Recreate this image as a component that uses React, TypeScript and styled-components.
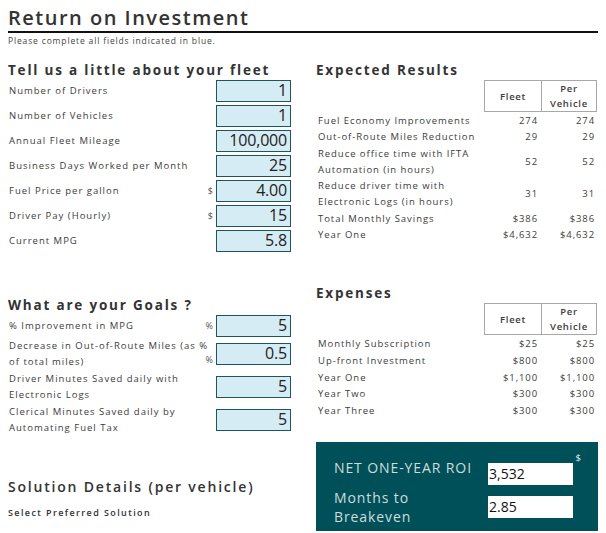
import React from "react";
import styled, { createGlobalStyle } from "styled-components";

const GlobalStyle = createGlobalStyle`
  html, body {
    margin: 0;
    padding: 0;
    background: #ffffff;
    font-family: "Open Sans", "Liberation Sans", sans-serif;
    color: #3c3c3c;
  }
`;

const Page = styled.div`
  width: 606px;
  height: 533px;
  box-sizing: border-box;
  padding: 6px 8px 0 8px;
  overflow: hidden;
`;

const Title = styled.h1`
  margin: 0;
  font-size: 20px;
  line-height: 24px;
  font-weight: 600;
  letter-spacing: 1.5px;
  color: #333;
`;

const Rule = styled.hr`
  margin: 1px 0 0 0;
  border: 0;
  height: 2px;
  background: #111;
  width: 590px;
`;

const Subtitle = styled.div`
  margin-top: 2px;
  font-size: 8.5px;
  line-height: 12px;
  color: #444;
  letter-spacing: 0.85px;
`;

const Columns = styled.div`
  display: grid;
  grid-template-columns: 292px 282px;
  column-gap: 16px;
`;

const Column = styled.div`
  display: flex;
  flex-direction: column;
`;

const Heading = styled.h2<{ $top: number }>`
  margin: ${({ $top }) => $top}px 0 1px 0;
  font-size: 13.5px;
  line-height: 18px;
  font-weight: 700;
  letter-spacing: 1.8px;
  color: #333;
  white-space: nowrap;
`;

const InputRows = styled.div<{ $gap: number }>`
  display: flex;
  flex-direction: column;
  gap: ${({ $gap }) => $gap}px;
`;

const InputRow = styled.div`
  display: grid;
  grid-template-columns: 196px 12px 75px;
  align-items: center;
`;

const Label = styled.div`
  font-size: 9.5px;
  line-height: 16px;
  letter-spacing: 1px;
  color: #3c3c3c;
  padding-left: 1px;
  white-space: nowrap;
`;

const Unit = styled.div<{ $end?: boolean }>`
  font-size: 9px;
  line-height: 14px;
  color: #555;
  text-align: right;
  padding-right: 3px;
  align-self: ${({ $end }) => ($end ? "end" : "center")};
  margin-bottom: ${({ $end }) => ($end ? "3px" : "0")};
`;

const Field = styled.div`
  height: 22px;
  box-sizing: border-box;
  background: #d6ecf4;
  border: 1.5px solid #1c555d;
  font-size: 16px;
  line-height: 19px;
  text-align: right;
  padding-right: 3px;
  color: #222;
  letter-spacing: -0.2px;
`;

const SolutionHeading = styled.h2`
  margin: 42px 0 0 0;
  font-size: 14px;
  line-height: 18px;
  font-weight: 600;
  letter-spacing: 1.8px;
  color: #333;
  white-space: nowrap;
`;

const SolutionSub = styled.div`
  margin-top: 11px;
  font-size: 9px;
  line-height: 12px;
  font-weight: 600;
  letter-spacing: 1.4px;
  color: #333;
`;

const TableHead = styled.div`
  display: flex;
  margin-left: 168px;
  height: 32px;
`;

const HeadCell = styled.div<{ $w: number }>`
  width: ${({ $w }) => $w}px;
  box-sizing: border-box;
  border: 1px solid #a8a8a8;
  & + & {
    border-left: 0;
  }
  display: flex;
  align-items: center;
  justify-content: center;
  text-align: center;
  font-size: 9.5px;
  line-height: 15px;
  font-weight: 600;
  letter-spacing: 0.7px;
  color: #3c3c3c;
`;

const TableBody = styled.div<{ $lh: number }>`
  display: grid;
  grid-template-columns: 168px 58px 55px;
  align-items: center;
  margin-top: 1px;
  line-height: ${({ $lh }) => $lh}px;
`;

const RowLabel = styled.div`
  font-size: 9.5px;
  letter-spacing: 0.95px;
  color: #3c3c3c;
  padding-left: 2px;
  white-space: nowrap;
`;

const Value = styled.div<{ $pad: number }>`
  font-size: 9.5px;
  letter-spacing: 0.9px;
  text-align: right;
  padding-right: ${({ $pad }) => $pad}px;
  color: #3c3c3c;
`;

const RoiBox = styled.div`
  margin-top: 23px;
  background: #00505a;
  padding: 10px 24px 5px 18px;
  display: flex;
  flex-direction: column;
  gap: 3px;
  height: 89px;
  box-sizing: border-box;
`;

const RoiRow = styled.div`
  display: grid;
  grid-template-columns: 154px 85px;
  align-items: center;
`;

const RoiLabel = styled.div<{ $top?: number }>`
  font-size: 14px;
  line-height: 19px;
  letter-spacing: 0.9px;
  color: #cfdcdc;
  white-space: nowrap;
  align-self: ${({ $top }) => ($top !== undefined ? "start" : "center")};
  padding-top: ${({ $top }) => $top ?? 0}px;
`;

const RoiField = styled.div`
  height: 22px;
  background: #ffffff;
  color: #111;
  font-size: 14px;
  line-height: 22px;
  padding-left: 1px;
`;

const Dollar = styled.div`
  font-size: 9.5px;
  line-height: 11px;
  color: #e6eeee;
  text-align: right;
  margin-right: -8px;
`;

type FleetRow = { label: string; value: string; unit?: string };

const fleetRows: FleetRow[] = [
  { label: "Number of Drivers", value: "1" },
  { label: "Number of Vehicles", value: "1" },
  { label: "Annual Fleet Mileage", value: "100,000" },
  { label: "Business Days Worked per Month", value: "25" },
  { label: "Fuel Price per gallon", value: "4.00", unit: "$" },
  { label: "Driver Pay (Hourly)", value: "15", unit: "$" },
  { label: "Current MPG", value: "5.8" },
];

type GoalRow = { lines: string[]; value: string; unit?: string; unitEnd?: boolean };

const goalRows: GoalRow[] = [
  { lines: ["% Improvement in MPG"], value: "5", unit: "%" },
  { lines: ["Decrease in Out-of-Route Miles (as %", "of total miles)"], value: "0.5", unit: "%", unitEnd: true },
  { lines: ["Driver Minutes Saved daily with", "Electronic Logs"], value: "5" },
  { lines: ["Clerical Minutes Saved daily by", "Automating Fuel Tax"], value: "5" },
];

type ResultRow = { lines: string[]; fleet: string; vehicle: string };

const results: ResultRow[] = [
  { lines: ["Fuel Economy Improvements"], fleet: "274", vehicle: "274" },
  { lines: ["Out-of-Route Miles Reduction"], fleet: "29", vehicle: "29" },
  { lines: ["Reduce office time with IFTA", "Automation (in hours)"], fleet: "52", vehicle: "52" },
  { lines: ["Reduce driver time with", "Electronic Logs (in hours)"], fleet: "31", vehicle: "31" },
  { lines: ["Total Monthly Savings"], fleet: "$386", vehicle: "$386" },
  { lines: ["Year One"], fleet: "$4,632", vehicle: "$4,632" },
];

const expenses: ResultRow[] = [
  { lines: ["Monthly Subscription"], fleet: "$25", vehicle: "$25" },
  { lines: ["Up-front Investment"], fleet: "$800", vehicle: "$800" },
  { lines: ["Year One"], fleet: "$1,100", vehicle: "$1,100" },
  { lines: ["Year Two"], fleet: "$300", vehicle: "$300" },
  { lines: ["Year Three"], fleet: "$300", vehicle: "$300" },
];

function Lines({ lines }: { lines: string[] }) {
  return (
    <>
      {lines.map((l, i) => (
        <div key={i}>{l}</div>
      ))}
    </>
  );
}

function ResultTable({ rows, lh }: { rows: ResultRow[]; lh: number }) {
  return (
    <>
      <TableHead>
        <HeadCell $w={58}>Fleet</HeadCell>
        <HeadCell $w={55}>
          Per
          <br />
          Vehicle
        </HeadCell>
      </TableHead>
      <TableBody $lh={lh}>
        {rows.map((r, i) => (
          <React.Fragment key={i}>
            <RowLabel>
              <Lines lines={r.lines} />
            </RowLabel>
            <Value $pad={4}>{r.fleet}</Value>
            <Value $pad={2}>{r.vehicle}</Value>
          </React.Fragment>
        ))}
      </TableBody>
    </>
  );
}

export default function App() {
  return (
    <>
      <GlobalStyle />
      <Page>
        <Title>Return on Investment</Title>
        <Rule />
        <Subtitle>Please complete all fields indicated in blue.</Subtitle>
        <Columns>
          <Column>
            <Heading $top={14}>Tell us a little about your fleet</Heading>
            <InputRows $gap={3}>
              {fleetRows.map((r) => (
                <InputRow key={r.label}>
                  <Label>{r.label}</Label>
                  <Unit>{r.unit ?? ""}</Unit>
                  <Field>{r.value}</Field>
                </InputRow>
              ))}
            </InputRows>

            <Heading $top={44}>What are your Goals ?</Heading>
            <InputRows $gap={1}>
              {goalRows.map((r, i) => (
                <InputRow key={i}>
                  <Label>
                    <Lines lines={r.lines} />
                  </Label>
                  <Unit $end={r.unitEnd}>{r.unit ?? ""}</Unit>
                  <Field>{r.value}</Field>
                </InputRow>
              ))}
            </InputRows>

            <SolutionHeading>Solution Details (per vehicle)</SolutionHeading>
            <SolutionSub>Select Preferred Solution</SolutionSub>
          </Column>

          <Column>
            <Heading $top={14}>Expected Results</Heading>
            <ResultTable rows={results} lh={16.3} />

            <Heading $top={41}>Expenses</Heading>
            <ResultTable rows={expenses} lh={16.6} />

            <RoiBox>
              <RoiRow>
                <RoiLabel $top={6}>NET ONE-YEAR ROI</RoiLabel>
                <div>
                  <Dollar>$</Dollar>
                  <RoiField>3,532</RoiField>
                </div>
              </RoiRow>
              <RoiRow>
                <RoiLabel>
                  Months to
                  <br />
                  Breakeven
                </RoiLabel>
                <RoiField>2.85</RoiField>
              </RoiRow>
            </RoiBox>
          </Column>
        </Columns>
      </Page>
    </>
  );
}
